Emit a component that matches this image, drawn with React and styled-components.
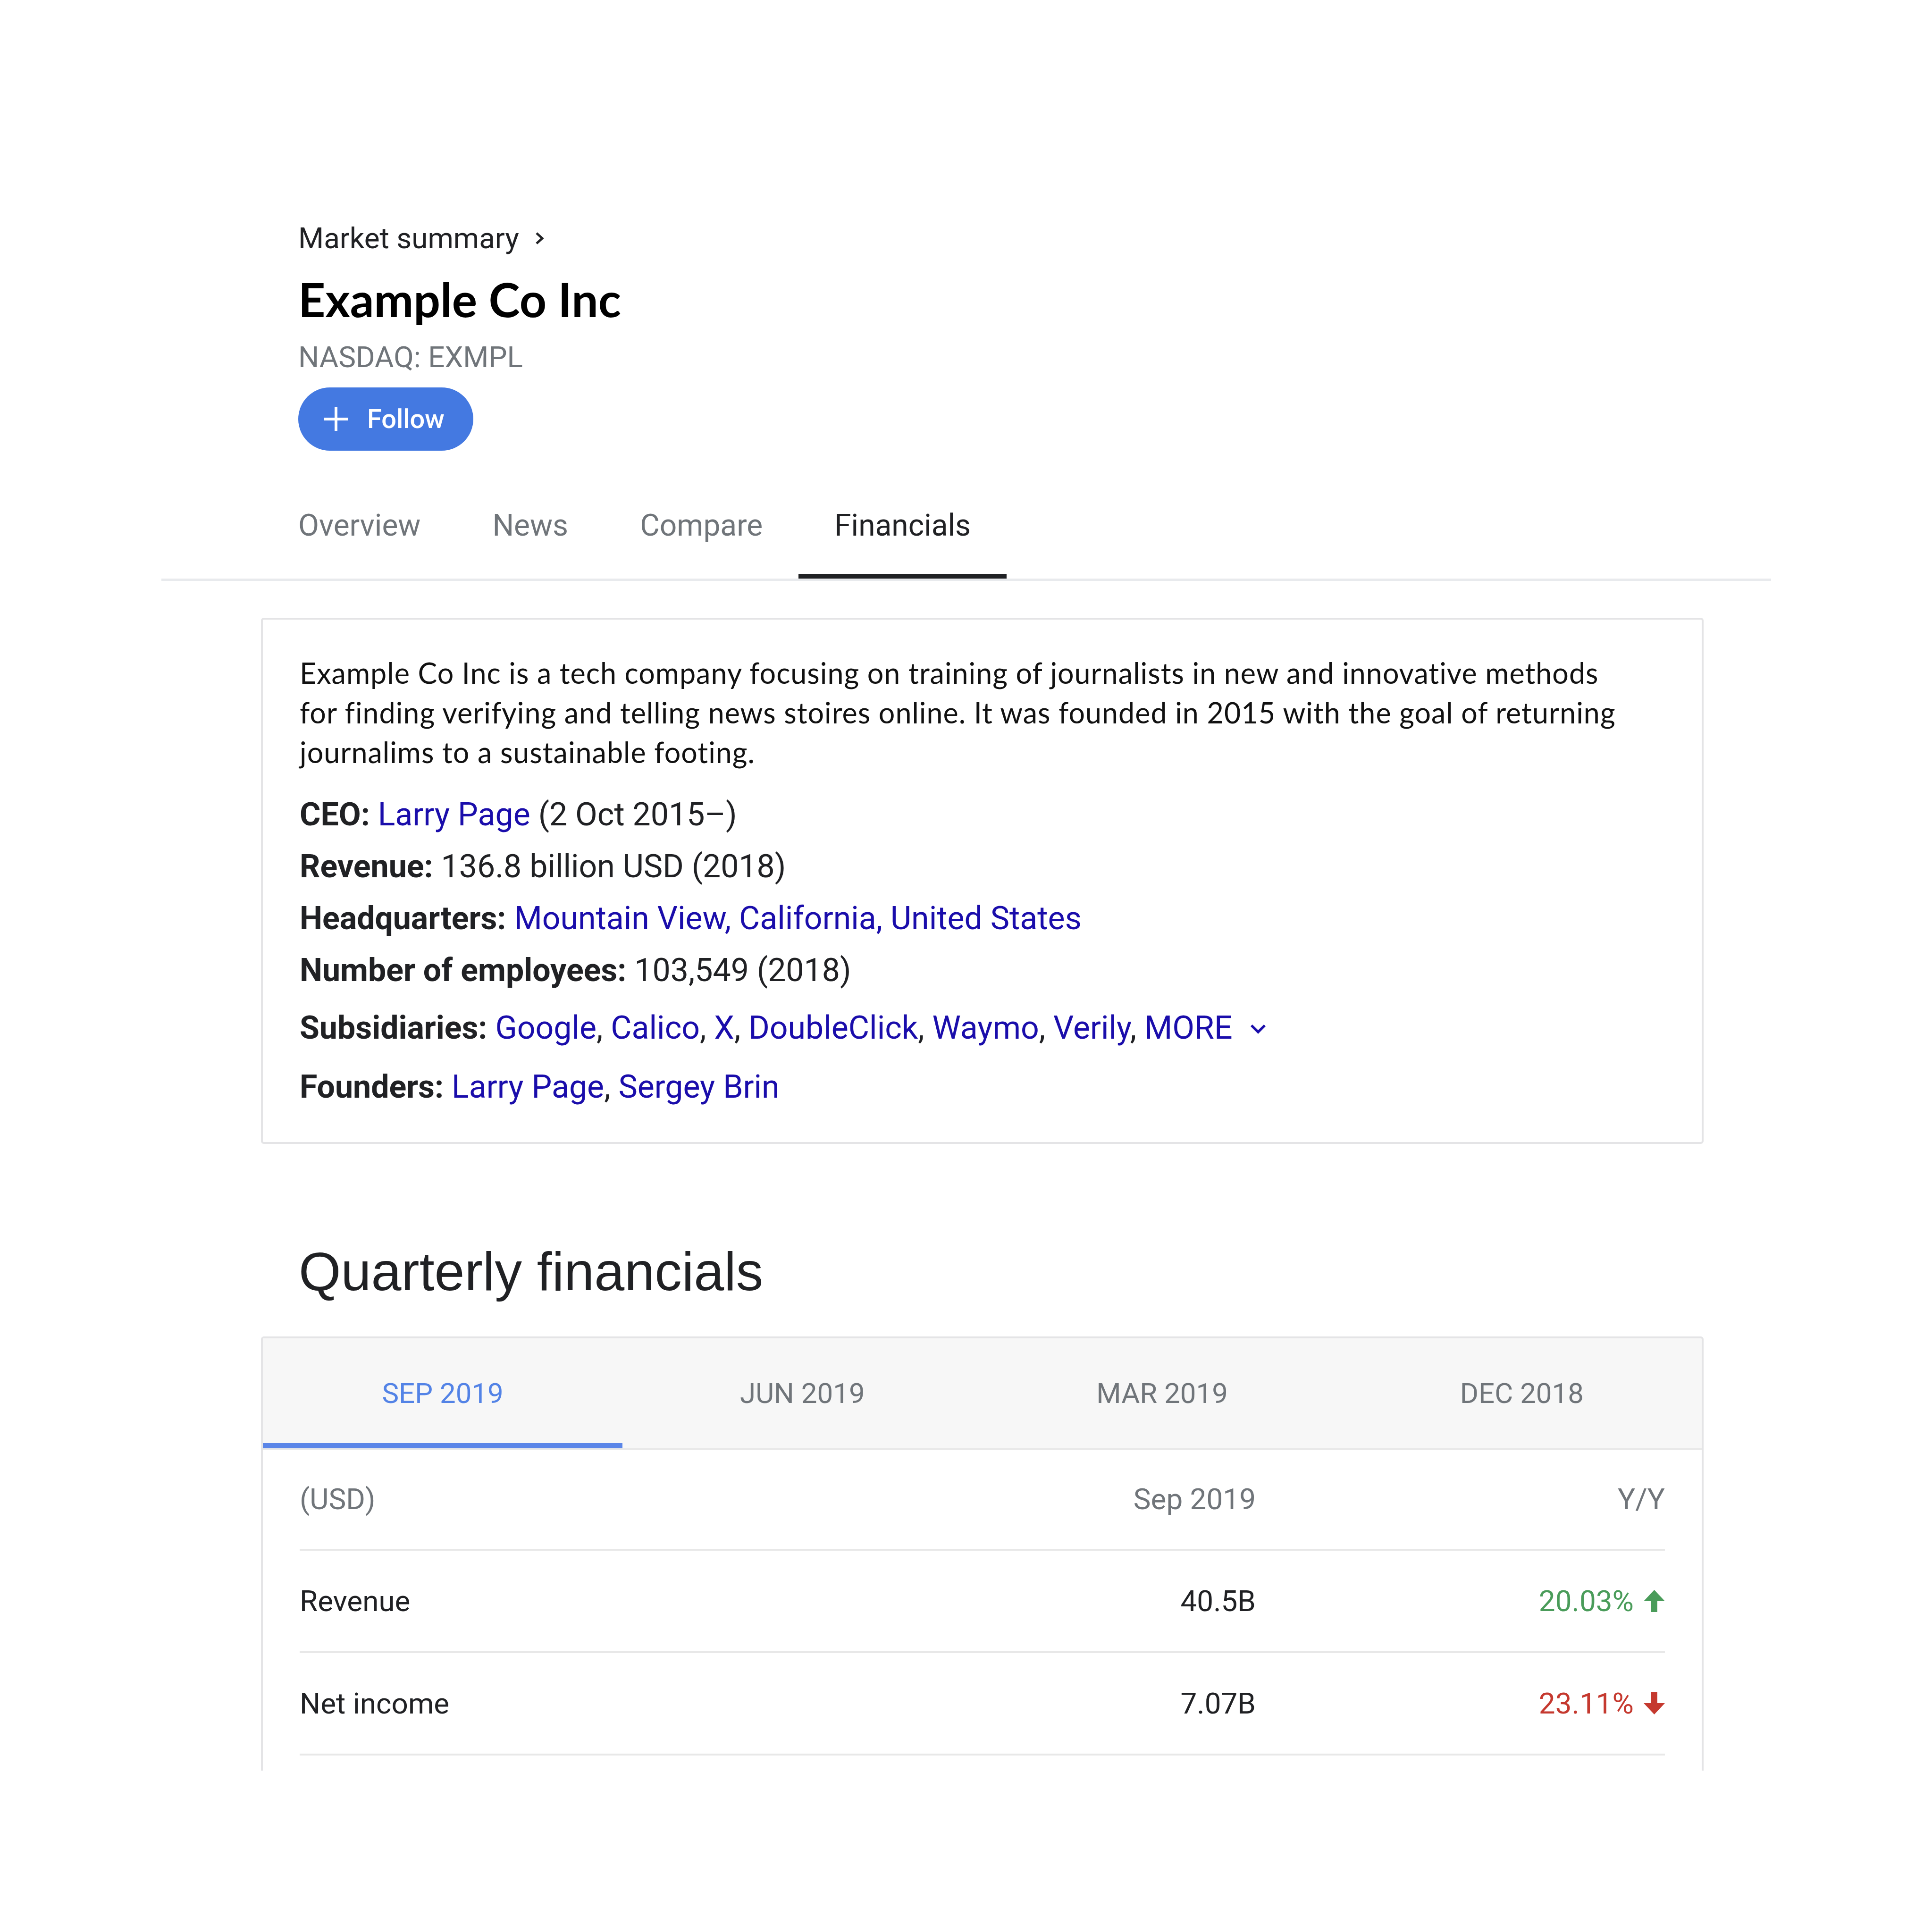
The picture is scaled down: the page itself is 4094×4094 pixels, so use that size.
import styled, { createGlobalStyle } from "styled-components";

const GlobalStyle = createGlobalStyle`
  html, body {
    margin: 0;
    padding: 0;
    background: #fff;
  }
  body {
    font-family: Roboto, "Liberation Sans", Arial, sans-serif;
    color: #202124;
  }
`;

const Page = styled.div`
  width: 3411px;
  margin-left: 342px;
  padding-top: 468px;
  padding-bottom: 340px;
`;

const Column = styled.div`
  margin-left: 211px;
  width: 3057px;
`;

const Header = styled.div`
  display: flex;
  flex-direction: column;
  align-items: flex-start;
  padding-left: 79px;
`;

const Breadcrumb = styled.div`
  display: flex;
  align-items: center;
  gap: 32px;
  font-size: 62px;
  line-height: 74px;
  color: #202124;
`;

const Title = styled.h1`
  margin: 36px 0 0;
  font-family: Lato, "Open Sans", sans-serif;
  font-weight: 700;
  font-size: 100px;
  line-height: 110px;
  color: #000;
`;

const Ticker = styled.div`
  margin-top: 33px;
  font-size: 62px;
  line-height: 72px;
  color: #70757a;
`;

const FollowButton = styled.button`
  margin-top: 28px;
  height: 134px;
  display: flex;
  align-items: center;
  gap: 40px;
  padding: 0 61px 0 54px;
  border: none;
  border-radius: 67px;
  background: #4479e1;
  color: #fff;
  font-family: Roboto, sans-serif;
  font-size: 56px;
  font-weight: 500;
`;

const TabBar = styled.div`
  margin-top: 122px;
  border-bottom: 5px solid #e8eaed;
`;

const TabList = styled.div`
  display: flex;
  margin-left: 214px;
`;

const Tab = styled.div`
  padding: 0 76px 65px;
  font-size: 64px;
  line-height: 74px;
  color: ${(p) => (p.$active ? "#202124" : "#70757a")};
  border-bottom: 10px solid ${(p) => (p.$active ? "#202124" : "transparent")};
`;

const InfoCard = styled.div`
  margin-top: 78px;
  border: 4px solid #e4e4e6;
  border-radius: 6px;
  padding: 71px 80px 62px 78px;
`;

const Description = styled.p`
  margin: 0;
  font-family: Lato, "Open Sans", sans-serif;
  font-size: 61px;
  line-height: 84px;
  letter-spacing: 1px;
  color: #111;
  white-space: nowrap;
`;

const Facts = styled.div`
  margin-top: 35px;
`;

const Fact = styled.div`
  margin-top: ${(p) => p.$gap || 0}px;
  font-size: 68px;
  line-height: 110px;
  color: #202124;
  white-space: nowrap;
`;

const Label = styled.b`
  font-weight: 700;
`;

const Link = styled.a`
  color: #1a0dab;
  text-decoration: none;
`;

const MoreIcon = styled.svg`
  margin-left: 22px;
  vertical-align: -11px;
`;

const SectionTitle = styled.h2`
  margin: 201px 0 0;
  padding-left: 80px;
  font-family: "Liberation Sans", Arial, sans-serif;
  font-weight: 400;
  font-size: 115px;
  line-height: 138px;
  color: #202124;
`;

const FinCard = styled.div`
  margin-top: 69px;
  border: 4px solid #e4e4e6;
  border-bottom: none;
  border-radius: 6px 6px 0 0;
  overflow: hidden;
`;

const Periods = styled.div`
  display: grid;
  grid-template-columns: repeat(4, 1fr);
  background: #f7f7f7;
  border-bottom: 3px solid #e8e8e8;
`;

const Period = styled.div`
  height: 233px;
  box-sizing: border-box;
  padding-top: 11px;
  display: flex;
  align-items: center;
  justify-content: center;
  font-size: 60px;
  color: ${(p) => (p.$active ? "#5383e6" : "#70757a")};
  border-bottom: 11px solid ${(p) => (p.$active ? "#5b86e8" : "transparent")};
`;

const Table = styled.div`
  padding: 0 78px 32px;
`;

const Row = styled.div`
  display: grid;
  grid-template-columns: 1fr auto 867px;
  align-items: center;
  height: ${(p) => (p.$head ? 210 : 213)}px;
  border-bottom: 4px solid #e8e8e8;
  font-size: 62px;
  line-height: 72px;
  color: ${(p) => (p.$head ? "#70757a" : "#202124")};
`;

const Value = styled.div`
  text-align: right;
`;

const Change = styled.div`
  display: flex;
  justify-content: flex-end;
  align-items: center;
  gap: 21px;
  color: ${(p) => (p.$up ? "#4a9c5a" : "#c5392f")};
`;

const Arrow = ({ up }) => (
  <svg width="45" height="47" viewBox="0 0 45 47">
    <polygon
      fill="currentColor"
      points={
        up
          ? "22.5,0 45,24 29,24 29,47 16,47 16,24 0,24"
          : "22.5,47 45,23 29,23 29,0 16,0 16,23 0,23"
      }
    />
  </svg>
);

const tabs = ["Overview", "News", "Compare", "Financials"];
const periods = ["SEP 2019", "JUN 2019", "MAR 2019", "DEC 2018"];
const rows = [
  { name: "Revenue", value: "40.5B", change: "20.03%", up: true },
  { name: "Net income", value: "7.07B", change: "23.11%", up: false },
];

const App = () => {
  return (
    <>
      <GlobalStyle />
      <Page>
        <Column>
          <Header>
            <Breadcrumb>
              Market summary
              <svg width="24" height="30" viewBox="0 0 24 30">
                <polyline points="5,4 17,15 5,26" fill="none" stroke="#202124" strokeWidth="5" />
              </svg>
            </Breadcrumb>
            <Title>Example Co Inc</Title>
            <Ticker>NASDAQ: EXMPL</Ticker>
            <FollowButton>
              <svg width="52" height="52" viewBox="0 0 52 52">
                <path d="M26 1v50M1 26h50" stroke="#fff" strokeWidth="6" />
              </svg>
              Follow
            </FollowButton>
          </Header>
        </Column>

        <TabBar>
          <TabList>
            {tabs.map((t) => (
              <Tab key={t} $active={t === "Financials"}>
                {t}
              </Tab>
            ))}
          </TabList>
        </TabBar>

        <Column>
          <InfoCard>
            <Description>
              Example Co Inc is a tech company focusing on training of journalists in new and innovative methods
              <br />
              for finding verifying and telling news stoires online. It was founded in 2015 with the goal of returning
              <br />
              journalims to a sustainable footing.
            </Description>
            <Facts>
              <Fact>
                <Label>CEO:</Label> <Link>Larry Page</Link> (2 Oct 2015–)
              </Fact>
              <Fact>
                <Label>Revenue:</Label> 136.8 billion USD (2018)
              </Fact>
              <Fact>
                <Label>Headquarters:</Label> <Link>Mountain View, California, United States</Link>
              </Fact>
              <Fact>
                <Label>Number of employees:</Label> 103,549 (2018)
              </Fact>
              <Fact $gap={12}>
                <Label>Subsidiaries:</Label> <Link>Google</Link>, <Link>Calico</Link>, <Link>X</Link>,{" "}
                <Link>DoubleClick</Link>, <Link>Waymo</Link>, <Link>Verily</Link>, <Link>MORE</Link>
                <MoreIcon width="64" height="64" viewBox="0 0 24 24">
                  <path fill="#1a0dab" d="M16.59 8.59L12 13.17 7.41 8.59 6 10l6 6 6-6z" />
                </MoreIcon>
              </Fact>
              <Fact $gap={15}>
                <Label>Founders:</Label> <Link>Larry Page</Link>, <Link>Sergey Brin</Link>
              </Fact>
            </Facts>
          </InfoCard>

          <SectionTitle>Quarterly financials</SectionTitle>

          <FinCard>
            <Periods>
              {periods.map((p, i) => (
                <Period key={p} $active={i === 0}>
                  {p}
                </Period>
              ))}
            </Periods>
            <Table>
              <Row $head>
                <div>(USD)</div>
                <Value>Sep 2019</Value>
                <Value>Y/Y</Value>
              </Row>
              {rows.map((r) => (
                <Row key={r.name}>
                  <div>{r.name}</div>
                  <Value>{r.value}</Value>
                  <Change $up={r.up}>
                    {r.change}
                    <Arrow up={r.up} />
                  </Change>
                </Row>
              ))}
            </Table>
          </FinCard>
        </Column>
      </Page>
    </>
  );
};

export default App;
